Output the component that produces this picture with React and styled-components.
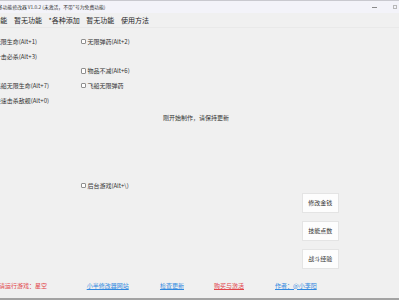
import React from "react";
import styled, { createGlobalStyle } from "styled-components";

const Global = createGlobalStyle`
  html, body { margin: 0; padding: 0; background: #f0f0f0; overflow: hidden; }
  body { font-family: "Noto Sans CJK SC", "Noto Sans", sans-serif; }
  * { box-sizing: border-box; }
`;

const Window = styled.div`
  width: 399px;
  height: 300px;
  display: flex;
  flex-direction: column;
  background: #f0f0f0;
  border-top: 1px solid #c9c9cf;
  border-bottom: 2px solid #a3a3a3;
  overflow: hidden;
`;

const TitleBar = styled.div`
  height: 12px;
  flex: none;
  display: flex;
  align-items: center;
  background: #f3f3f9;
`;

const Title = styled.span`
  margin-left: -2px;
  font-size: 4.8px;
  line-height: 12px;
  color: #333;
  white-space: nowrap;
`;

const Controls = styled.div`
  margin-left: auto;
  display: flex;
  align-items: center;
  gap: 15.5px;
  padding-right: 2px;
`;

const MinIcon = styled.div`
  width: 5px;
  height: 1px;
  background: #8a8a8a;
`;

const MaxIcon = styled.div`
  width: 4.5px;
  height: 4.5px;
  border: 0.8px solid #b8b8b8;
`;

const TabBar = styled.div`
  height: 15px;
  flex: none;
  display: flex;
  align-items: center;
  margin-left: -10px;
  border-bottom: 1px solid #e9e9e9;
`;

const Tab = styled.div`
  font-size: 7px;
  line-height: 14px;
  padding: 0 3.3px;
  color: #1e1e1e;
  white-space: nowrap;
`;

const Body = styled.div`
  flex: 1;
  display: flex;
  flex-direction: column;
`;

const CheckGrid = styled.div`
  margin-top: 6px;
  margin-left: -12px;
  display: grid;
  grid-template-columns: 92.7px 93.7px;
  grid-auto-rows: 14.75px;
  align-items: center;
`;

const Check = styled.label`
  display: flex;
  align-items: center;
  gap: 1.3px;
  font-size: 6px;
  color: #333;
  white-space: nowrap;
`;

const Box = styled.span`
  width: 5.4px;
  height: 5.4px;
  border: 0.7px solid #8f8f8f;
  border-radius: 1px;
  background: #fff;
  flex: none;
`;

const Notice = styled.div`
  margin-top: 6px;
  padding-left: 163px;
  font-size: 6px;
  line-height: 8px;
  color: #333;
  white-space: nowrap;
`;

const BgRow = styled.div`
  margin-top: 61px;
  padding-left: 80.7px;
  height: 6px;
  display: flex;
  align-items: center;
`;

const ButtonCol = styled.div`
  margin-top: 4px;
  padding-left: 301.7px;
  display: flex;
  flex-direction: column;
  gap: 8px;
`;

const Button = styled.div`
  width: 37px;
  height: 20px;
  display: flex;
  align-items: center;
  justify-content: center;
  background: #fdfdfd;
  border: 0.7px solid #e4e4e4;
  font-size: 6px;
  color: #333;
`;

const Footer = styled.div`
  margin-top: auto;
  height: 26px;
  margin-left: -1px;
  display: grid;
  grid-template-columns: 87.7px 73.3px 54px 61px auto;
  align-items: center;
`;

const FooterText = styled.span`
  font-size: 6px;
  color: ${(p) => (p.$red ? "#e2454a" : "#3189e0")};
  text-decoration: ${(p) => (p.$link ? "underline" : "none")};
  text-decoration-thickness: 0.6px;
  text-underline-offset: 1px;
  white-space: nowrap;
`;

const checks = [
  "无限生命(Alt+1)", "无限弹药(Alt+2)",
  "一击必杀(Alt+3)", null,
  null, "物品不减(Alt+6)",
  "飞船无限生命(Alt+7)", "飞船无限弹药",
  "快速击杀敌舰(Alt+0)", null,
];

export default function App() {
  return (
    <>
      <Global />
      <Window>
        <TitleBar>
          <Title>多功能修改器 V1.0.2 (未激活，不带*号为免费功能)</Title>
          <Controls>
            <MinIcon />
            <MaxIcon />
          </Controls>
        </TitleBar>
        <TabBar>
          <Tab>功能</Tab>
          <Tab>暂无功能</Tab>
          <Tab>*各种添加</Tab>
          <Tab>暂无功能</Tab>
          <Tab>使用方法</Tab>
        </TabBar>
        <Body>
          <CheckGrid>
            {checks.map((c, i) =>
              c ? (
                <Check key={i}>
                  <Box />
                  {c}
                </Check>
              ) : (
                <span key={i} />
              )
            )}
          </CheckGrid>
          <Notice>刚开始制作，请保持更新</Notice>
          <BgRow>
            <Check>
              <Box />
              后台游戏(Alt+\)
            </Check>
          </BgRow>
          <ButtonCol>
            <Button>修改金钱</Button>
            <Button>技能点数</Button>
            <Button>战斗经验</Button>
          </ButtonCol>
          <Footer>
            <FooterText $red>请运行游戏：星空</FooterText>
            <FooterText $link>小半修改器网站</FooterText>
            <FooterText $link>检查更新</FooterText>
            <FooterText $red $link>购买与激活</FooterText>
            <FooterText $link>作者：@小李阳</FooterText>
          </Footer>
        </Body>
      </Window>
    </>
  );
}
